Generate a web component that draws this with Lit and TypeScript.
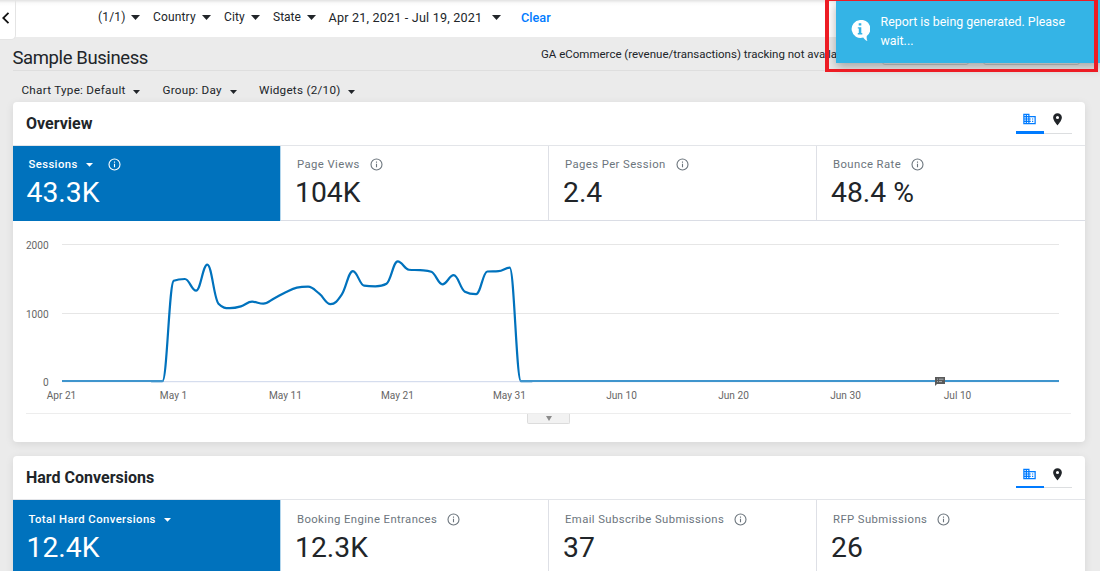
import { LitElement, html, svg, css, nothing } from "lit";
import { customElement, property } from "lit/decorators.js";

interface Metric {
  label: string;
  value: string;
  ls: number;
  menu?: boolean;
  info?: boolean;
}

const DAYS = 90;
const FIRST_DAY = 10;
const ACTIVE = [
  1466, 1491, 1320, 1700, 1130, 1064, 1091, 1159, 1130, 1210, 1298, 1364, 1378, 1276, 1123, 1261,
  1605, 1393, 1384, 1422, 1748, 1626, 1619, 1597, 1413, 1546, 1305, 1269, 1600, 1605, 1656,
];
const SESSIONS = Array.from({ length: DAYS }, (_, i) => ACTIVE[i - FIRST_DAY] ?? 0);

/* Monotone-ish spline with control points clamped between neighbours. */
function spline(points: [number, number][]): string {
  let d = `M${points[0][0]} ${points[0][1]}`;
  let right: [number, number] = points[0];
  for (let i = 1; i < points.length; i++) {
    const [x, y] = points[i];
    const [lx, ly] = points[i - 1];
    let left: [number, number] = [x, y];
    let nextRight: [number, number] = [x, y];
    if (i < points.length - 1) {
      const [nx, ny] = points[i + 1];
      const lcx = (1.5 * x + lx) / 2.5;
      let lcy = (1.5 * y + ly) / 2.5;
      const rcx = (1.5 * x + nx) / 2.5;
      let rcy = (1.5 * y + ny) / 2.5;
      const corr = ((rcy - lcy) * (rcx - x)) / (rcx - lcx) + y - rcy;
      lcy += corr;
      rcy += corr;
      if (lcy > ly && lcy > y) {
        lcy = Math.max(ly, y);
        rcy = 2 * y - lcy;
      } else if (lcy < ly && lcy < y) {
        lcy = Math.min(ly, y);
        rcy = 2 * y - lcy;
      }
      if (rcy > ny && rcy > y) {
        rcy = Math.max(ny, y);
        lcy = 2 * y - rcy;
      } else if (rcy < ny && rcy < y) {
        rcy = Math.min(ny, y);
        lcy = 2 * y - rcy;
      }
      left = [lcx, lcy];
      nextRight = [rcx, rcy];
    }
    d += `C${right[0].toFixed(2)} ${right[1].toFixed(2)} ${left[0].toFixed(2)} ${left[1].toFixed(2)} ${x.toFixed(2)} ${y.toFixed(2)}`;
    right = nextRight;
  }
  return d;
}

@customElement("session-chart")
export class SessionChart extends LitElement {
  static styles = css`
    :host { display: block; height: 191.5px; }
    svg { display: block; }
    text { font: 10.15px Roboto, sans-serif; fill: #666; }
    .grid { stroke: #e6e6e6; stroke-width: 1; }
    .axis { stroke: #ccd6eb; stroke-width: 1; }
    .line { fill: none; stroke: #0072bd; stroke-width: 2.2; stroke-linejoin: round; stroke-linecap: round; }
  `;

  render() {
    const step = 11.2;
    const pts = SESSIONS.map((v, i): [number, number] => [48.7 + i * step, 160.1 - v / 14.6]);
    const ticks = ["Apr 21", "May 1", "May 11", "May 21", "May 31", "Jun 10", "Jun 20", "Jun 30", "Jul 10"];
    return html`<svg width="1072" height="191" viewBox="0 0 1072 191">
      <path class="grid" d="M49 23.5H1046M49 92.5H1046" />
      <path class="axis" d="M49 160.7H1046" />
      <path class="line" d=${spline(pts.slice(8, 43))} />
      <path d="M49 160H150.5M507 160H1046" stroke="#3f95cd" stroke-width="1.8" />
      <text x="35.7" y="28.2" text-anchor="end">2000</text>
      <text x="35.7" y="96.7" text-anchor="end">1000</text>
      <text x="35.7" y="165" text-anchor="end">0</text>
      ${ticks.map((t, i) => svg`<text x=${48.5 + i * 112} y="177.8" text-anchor="middle">${t}</text>`)}
      <path d="M922 156h10v7h-8l-2 2z" fill="#5a5a5a" />
      <path d="M924 158.2h1M926 158.2h4.5M924 160.6h1M926 160.6h3" stroke="#b5bcc1" stroke-width=".9" />
    </svg>`;
  }
}

@customElement("metric-panel")
export class MetricPanel extends LitElement {
  @property() heading = "";
  @property({ attribute: false }) metrics: Metric[] = [];

  static styles = css`
    :host {
      display: block; background: #fff; border-radius: 4px; color: #212529;
      box-shadow: 0 2px 8px rgba(0, 0, 0, 0.09);
      font-family: Roboto, sans-serif;
    }
    .head { display: flex; justify-content: space-between; box-sizing: border-box; height: 44px; padding: 0 13.5px 0 13px; border-bottom: 1px solid #e3e5e9; }
    .heading { font-size: 16px; font-weight: 700; line-height: 43px; white-space: nowrap; }
    .tabs { display: flex; height: 32px; width: 56px; }
    .tab { flex: 1; display: flex; justify-content: center; box-sizing: border-box; padding-top: var(--icon-top, 10px); border-bottom: 1px solid #dcdee0; }
    .tab.on { border-bottom: var(--underline, 3px) solid #007bff; }
    .row { display: grid; grid-template-columns: repeat(4, 268px); height: 75px; border-bottom: 1px solid #dadde5; box-sizing: border-box; }
    .cell { box-sizing: border-box; padding: 0 16px; border-right: 1px solid #dee0e6; height: 74px; }
    .cell:last-child { border-right: none; }
    .cell.on { background: #0072bd; color: #fff; border-right-color: #b5d7ed; height: 75px; padding-left: 15.5px; }
    .label { display: flex; align-items: center; height: 18px; padding-top: var(--label-top, 9px); font-size: 11.3px; color: #6c757d; white-space: nowrap; }
    .cell.on .label { color: #fff; font-weight: 500; }
    .menu { margin-left: 8px; margin-top: 2px; }
    .info { margin-left: 10px; }
    .menu + .info { margin-left: 15px; }
    .value { font-size: 28.3px; line-height: 36px; margin-top: 1.5px; margin-left: -2px; white-space: nowrap; }
  `;

  render() {
    return html`
      <div class="head">
        <div class="heading">${this.heading}</div>
        <div class="tabs">
          <div class="tab on">
            <svg width="15" height="14" viewBox="0 0 24 24" preserveAspectRatio="none"><path fill="#007bff" d="M12 7V3H2v18h20V7H12zM6 19H4v-2h2v2zm0-4H4v-2h2v2zm0-4H4V9h2v2zm0-4H4V5h2v2zm4 12H8v-2h2v2zm0-4H8v-2h2v2zm0-4H8V9h2v2zm0-4H8V5h2v2zm10 12h-8v-2h2v-2h-2v-2h2v-2h-2V9h8v10zm-2-8h-2v2h2v-2zm0 4h-2v2h2v-2z" /></svg>
          </div>
          <div class="tab">
            <svg width="15" height="14.5" viewBox="0 0 24 24" preserveAspectRatio="none"><path fill="#212529" d="M12 2C8.13 2 5 5.13 5 9c0 5.25 7 13 7 13s7-7.75 7-13c0-3.87-3.13-7-7-7zm0 9.5a2.5 2.5 0 0 1 0-5 2.5 2.5 0 0 1 0 5z" /></svg>
          </div>
        </div>
      </div>
      <div class="row">
        ${this.metrics.map(
          (m, i) => html`<div class="cell ${i === 0 ? "on" : ""}">
            <div class="label">
              <span style="letter-spacing:${m.ls}px">${m.label}</span>
              ${m.menu ? html`<svg class="menu" width="7" height="4" viewBox="0 0 7 4"><path fill="currentColor" d="M0 0h7L3.5 3.8z" /></svg>` : nothing}
              ${m.info
                ? html`<svg class="info" width="13" height="13" viewBox="0 0 13 13"><circle cx="6.5" cy="6.5" r="5.5" fill="none" stroke="currentColor" stroke-width="1.1" /><path d="M6.5 5.8v3.5M6.5 3.6v1.2" stroke="currentColor" stroke-width="1.1" /></svg>`
                : nothing}
            </div>
            <div class="value">${m.value}</div>
          </div>`
        )}
      </div>
      <slot></slot>
    `;
  }
}

const caret = (w: number, h: number) =>
  html`<svg class="caret" width=${w} height=${h} viewBox="0 0 10 5" preserveAspectRatio="none"><path fill="#212529" d="M0 0h10L5 5z" /></svg>`;

@customElement("app-root")
export class AppRoot extends LitElement {
  static styles = css`
    :host {
      display: block; position: relative; width: 1100px; height: 571px; overflow: hidden;
      background: #ebebeb; color: #212529; font-family: Roboto, sans-serif;
    }
    .topbar { display: flex; height: 37px; background: linear-gradient(#e2e2e2, #fafafa 3px, #fff 6px); }
    .back { display: flex; align-items: center; box-sizing: border-box; width: 16px; height: 40px; padding: 0 0 4px 2px; background: linear-gradient(#e2e2e2, #fafafa 3px, #fff 6px); border: solid #e4e4e4; border-width: 0 1px 1px 0; border-radius: 0 0 5px 0; }
    .filters { display: grid; grid-template-columns: 55px 71px 49px 55.5px 192.5px auto; height: 35px; padding-left: 82px; line-height: 35px; }
    .filter { display: flex; align-items: center; font-size: 12px; white-space: nowrap; }
    .filter .caret { margin-left: 6px; }
    .filter.date { font-size: 12.6px; }
    .filter.date .caret { margin-left: 9.5px; }
    .clear { font-size: 12.7px; font-weight: 500; color: #007bff; }
    .title { display: flex; box-sizing: border-box; height: 34px; margin: 0 15px 0 13px; border-bottom: 1px solid #dedede; white-space: nowrap; }
    .name { width: 528px; font-size: 18.5px; line-height: 42px; letter-spacing: -0.4px; text-indent: -0.5px; }
    .note { font-size: 11.5px; line-height: 35px; width: 341px; overflow: hidden; }
    .under { display: flex; gap: 14px; }
    .btn { box-sizing: border-box; height: 18px; margin-top: 10px; border: 1px solid #c9c9c9; border-radius: 3px; width: 87px; }
    .btn.wide { width: 97px; }
    .options { display: grid; grid-template-columns: 141px 96.5px auto; height: 31px; padding: 0 0 0 21.5px; font-size: 11.7px; letter-spacing: 0.26px; line-height: 38px; }
    .option { display: flex; align-items: center; height: 38px; white-space: nowrap; }
    .option .caret { margin: 3px 0 0 7.8px; }
    .panels { display: flex; flex-direction: column; gap: 14px; width: 1072px; margin-left: 13px; }
    .overview { height: 340px; }
    .conversions { height: 140px; --underline: 2px; --icon-top: 11px; --label-top: 10px; }
    .expand { display: flex; justify-content: center; margin: 0 14px 0 13px; border-top: 1px solid #ededed; }
    .handle { display: flex; justify-content: center; box-sizing: border-box; width: 43px; height: 10px; padding-top: 2px; background: #f2f2f2; border: solid #dcdcdc; border-width: 0 1px 1px; border-radius: 0 0 2px 2px; }
    .toast { position: absolute; top: 0; left: 836px; width: 264px; height: 63px; display: flex; box-sizing: border-box; padding: 13px 0 0 15px; background: #34b4e6; color: #fff; font-size: 12.4px; line-height: 18.6px; box-shadow: 0 4px 10px rgba(0, 0, 0, 0.3); }
    .toast svg { margin: 7px 10.5px 0 0; flex: none; }
    .toast div { white-space: nowrap; }
    .callout { position: absolute; left: 825px; top: -3px; width: 273px; height: 75px; box-sizing: border-box; border: 4px solid #ed1c24; border-bottom-width: 3px; }
  `;

  render() {
    return html`
      <div class="topbar">
        <div class="back">
          <svg width="8" height="12" viewBox="0 0 8 12"><path d="M6.5 .8L1.2 6l5.3 5.2" fill="none" stroke="#111" stroke-width="1.8" /></svg>
        </div>
        <div class="filters">
          <div class="filter"><span style="letter-spacing:.15px">(1/1)</span>${caret(9, 5)}</div>
          <div class="filter"><span style="letter-spacing:.15px">Country</span>${caret(9, 5)}</div>
          <div class="filter"><span style="letter-spacing:.1px">City</span>${caret(9, 5)}</div>
          <div class="filter"><span>State</span>${caret(9, 5)}</div>
          <div class="filter date"><span style="letter-spacing:.19px">Apr 21, 2021 - Jul 19, 2021</span>${caret(9, 5)}</div>
          <div class="clear">Clear</div>
        </div>
      </div>
      <div class="title">
        <div class="name">Sample Business</div>
        <div class="note">GA eCommerce (revenue/transactions) tracking not available</div>
        <div class="under"><div class="btn"></div><div class="btn wide"></div></div>
      </div>
      <div class="options">
        <div class="option"><span>Chart Type: Default</span>${caret(7, 4)}</div>
        <div class="option"><span>Group: Day</span>${caret(7, 4)}</div>
        <div class="option"><span>Widgets (2/10)</span>${caret(7, 4)}</div>
      </div>
      <div class="panels">
        <metric-panel
          class="overview"
          heading="Overview"
          .metrics=${[
            { label: "Sessions", value: "43.3K", ls: 0.4, menu: true, info: true },
            { label: "Page Views", value: "104K", ls: 0.42, info: true },
            { label: "Pages Per Session", value: "2.4", ls: 0.42, info: true },
            { label: "Bounce Rate", value: "48.4 %", ls: 0.42, info: true },
          ] as Metric[]}
        >
          <session-chart></session-chart>
          <div class="expand">
            <div class="handle"><svg width="6" height="5" viewBox="0 0 6 5"><path d="M0 0h6L3 5z" fill="#8c8c8c" /></svg></div>
          </div>
        </metric-panel>
        <metric-panel
          class="conversions"
          heading="Hard Conversions"
          .metrics=${[
            { label: "Total Hard Conversions", value: "12.4K", ls: 0.42, menu: true },
            { label: "Booking Engine Entrances", value: "12.3K", ls: 0.4, info: true },
            { label: "Email Subscribe Submissions", value: "37", ls: 0.4, info: true },
            { label: "RFP Submissions", value: "26", ls: 0.42, info: true },
          ] as Metric[]}
        ></metric-panel>
      </div>
      <div class="toast">
        <svg width="19" height="22" viewBox="0 0 19 22">
          <path fill="#fff" d="M9 0a9 9 0 1 0 3.2 17.6c1 1.6 2.3 2.8 4.2 3.5-.7-1.4-.9-3.3-.6-5A9 9 0 0 0 9 0z" />
          <path fill="#34b4e6" d="M7.7 3.3h2.6v2.3H7.7zM6.8 7.2h3.5v5.9h1v1.3H6.8v-1.3h1V8.5h-1z" />
        </svg>
        <div>Report is being generated. Please<br />wait...</div>
      </div>
      <div class="callout"></div>
    `;
  }
}
